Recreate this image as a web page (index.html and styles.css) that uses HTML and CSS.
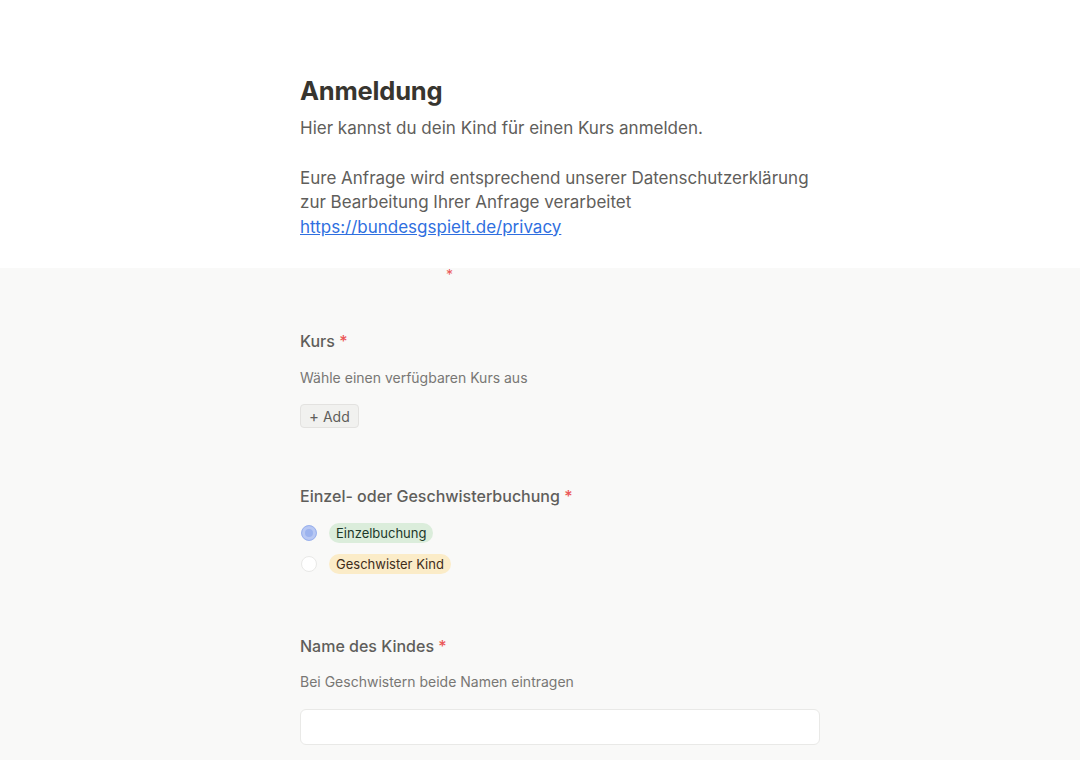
FILE: index.html
```html
<!DOCTYPE html>
<html lang="de">
<head>
<meta charset="utf-8">
<title>Anmeldung</title>
<link rel="stylesheet" href="styles.css">
</head>
<body>
<header class="intro">
  <div class="col">
    <h1 class="title">Anmeldung</h1>
    <p class="lead">Hier kannst du dein Kind für einen Kurs anmelden.</p>
    <p class="lead privacy">Eure Anfrage wird entsprechend unserer Datenschutzerklärung zur Bearbeitung Ihrer Anfrage verarbeitet <a class="link" href="#">https://bundesgspielt.de/privacy</a></p>
  </div>
</header>
<main class="form">
  <div class="col">
    <div class="req-mark"><span class="star">*</span></div>
    <section class="field field-first">
      <div class="label">Kurs <span class="star">*</span></div>
      <div class="hint">Wähle einen verfügbaren Kurs aus</div>
      <button class="add" type="button"><span class="plus">+</span> Add</button>
    </section>
    <section class="field">
      <div class="label">Einzel- oder Geschwisterbuchung <span class="star">*</span></div>
      <div class="options">
        <label class="option"><span class="radio checked"></span><span class="tag green">Einzelbuchung</span></label>
        <label class="option"><span class="radio"></span><span class="tag yellow">Geschwister Kind</span></label>
      </div>
    </section>
    <section class="field field-last">
      <div class="label">Name des Kindes <span class="star">*</span></div>
      <div class="hint hint-tight">Bei Geschwistern beide Namen eintragen</div>
      <div class="input"></div>
    </section>
  </div>
</main>
</body>
</html>
```
FILE: styles.css
```css
* { box-sizing: border-box; }
html, body { margin: 0; padding: 0; }
body {
  font-family: Inter, "Noto Sans", "Liberation Sans", sans-serif;
  color: #37352f;
  background: #f9f9f8;
}
.col { width: 560px; padding-left: 40px; margin: 0 auto; }
.intro { background: #ffffff; padding: 73px 0 29px; }
.title {
  margin: 0;
  font-size: 25.5px;
  font-weight: 700;
  line-height: 36px;
  color: #37352f;
  letter-spacing: -0.2px;
}
.lead {
  margin: 7px 0 0;
  font-size: 17px;
  line-height: 24.5px;
  color: #5f5e5b;
}
.privacy { margin-top: 25px; }
.link { color: #2f6fe0; text-decoration: underline; }
.form { padding-bottom: 40px; }
.req-mark { height: 0; position: relative; }
.req-mark .star { position: absolute; top: 0; left: 146px; font-size: 14px; line-height: 14px; }
.star { color: #eb5757; }
.field { padding-top: 56px; }
.field-first { padding-top: 61px; }
.field-last { padding-top: 59px; }
.label { font-size: 16px; line-height: 24px; color: #5f5e5b; font-weight: 500; }
.hint { margin-top: 15px; font-size: 14px; line-height: 20px; color: #787774; }
.hint-tight { margin-top: 14px; }
.add {
  margin-top: 16px;
  display: inline-flex;
  align-items: center;
  gap: 4px;
  height: 24px;
  padding: 0 8px;
  border: 1px solid #e3e2e0;
  border-radius: 4px;
  background: #f1f1ef;
  font-family: inherit;
  font-size: 14px;
  color: #5f5e5b;
}
.plus { font-size: 15px; }
.options { margin-top: 14px; display: flex; flex-direction: column; gap: 9px; }
.option { display: flex; align-items: center; gap: 12px; height: 22px; padding-left: 1px; }
.radio {
  width: 16px; height: 16px; border-radius: 50%;
  background: #ffffff;
  border: 1px solid #e9e9e7;
}
.radio.checked { background: #9cb3ee; border-color: #9cb3ee; box-shadow: inset 0 0 0 3px #b8c8f3; }
.tag {
  display: inline-block;
  height: 20px;
  line-height: 20px;
  padding: 0 7px;
  border-radius: 10px;
  font-size: 13px;
}
.tag.green { background: #dbeddb; color: #1c3829; }
.tag.yellow { background: #fbecc8; color: #402c1b; }
.input {
  margin-top: 17px;
  height: 36px;
  background: #ffffff;
  border: 1px solid #e9e9e7;
  border-radius: 6px;
}
```
